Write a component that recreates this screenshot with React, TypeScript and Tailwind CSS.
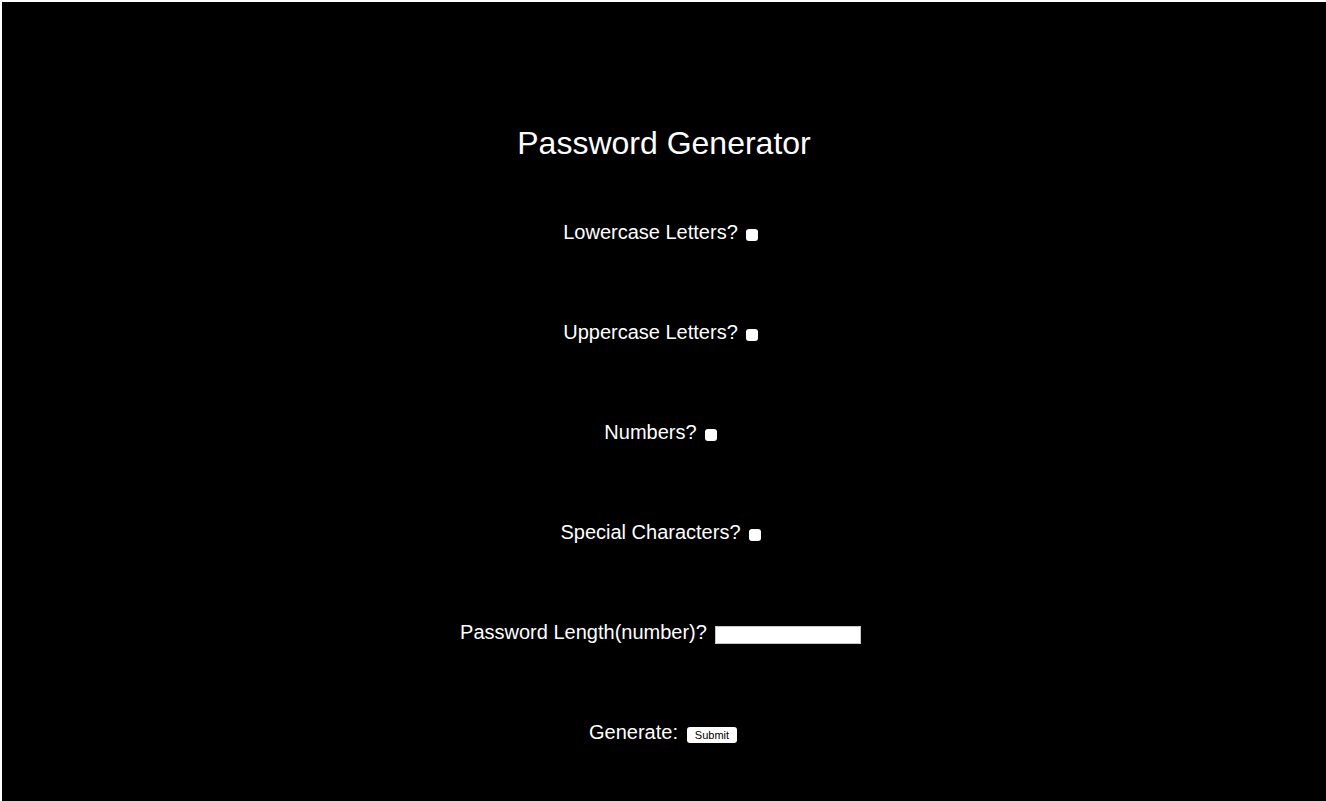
const rows = [
  "Lowercase Letters?",
  "Uppercase Letters?",
  "Numbers?",
  "Special Characters?",
];

function CheckRow({ label }: { label: string }) {
  return (
    <div className="flex h-[23px] items-center justify-center">
      <span>{label}</span>
      <input
        type="checkbox"
        className="mt-[5px] mr-[7px] ml-[8px] h-[12px] w-[12px] appearance-none rounded-[3px] bg-white"
      />
    </div>
  );
}

export default function App() {
  return (
    <div className="h-[801px] overflow-hidden bg-white pt-[2px] pl-[2px]">
      <div
        className="flex h-[820px] w-full flex-col items-center bg-black pt-[123px] text-white"
        style={{ fontFamily: '"Liberation Sans", Arial, sans-serif' }}
      >
        <h1 className="text-[32px] leading-[37px]">Password Generator</h1>
        <div className="mt-[59px] flex flex-col gap-[77px] text-[20px] leading-[23px]">
          {rows.map((r) => (
            <CheckRow key={r} label={r} />
          ))}
          <div className="flex h-[23px] items-center justify-center">
            <span>Password Length(number)?</span>
            <input
              type="text"
              className="mt-[4px] mr-[7px] ml-[8px] h-[18px] w-[146px] border border-[#c8c8c8] bg-white text-black outline-none"
            />
          </div>
          <div className="flex h-[23px] items-center justify-center">
            <span>Generate:</span>
            <button className="mt-[5px] mr-[2px] ml-[9px] h-[16px] w-[50px] rounded-[3px] bg-white text-[11px] leading-[16px] text-black">
              Submit
            </button>
          </div>
        </div>
      </div>
    </div>
  );
}
